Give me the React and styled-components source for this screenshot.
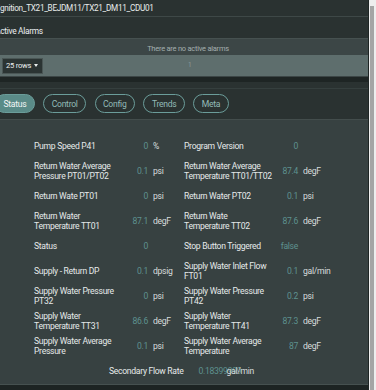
import React from "react";
import styled, { createGlobalStyle } from "styled-components";

const Global = createGlobalStyle`
  html, body {
    margin: 0;
    padding: 0;
    background: #2a3231;
    overflow: hidden;
  }
  body {
    font-family: Roboto, "Liberation Sans", sans-serif;
    letter-spacing: -0.3px;
  }
`;

const Page = styled.div`
  display: flex;
  width: 376px;
  height: 390px;
  overflow: hidden;
`;

const Main = styled.div`
  flex: 1;
  min-width: 0;
  overflow: hidden;
  display: flex;
  flex-direction: column;
`;

const Shifted = styled.div`
  margin-left: -8px;
  display: flex;
  flex-direction: column;
  flex: 1;
`;

const TitleBar = styled.div`
  height: 16px;
  display: flex;
  align-items: center;
  padding-left: 6px;
  font-size: 8.2px;
  color: #e8eceb;
  border-bottom: 1px solid #3e4847;
  white-space: nowrap;
`;

const AlarmsHeader = styled.div`
  height: 21px;
  box-sizing: border-box;
  display: flex;
  align-items: flex-end;
  padding: 0 0 2px 3px;
  font-size: 8.4px;
  color: #eceff0;
`;

const EmptyRow = styled.div`
  height: 17px;
  box-sizing: border-box;
  background: #3c4646;
  border-top: 1px solid #465150;
  display: flex;
  align-items: flex-end;
  justify-content: center;
  padding: 0 0 2px 16px;
  font-size: 7.5px;
  letter-spacing: -0.25px;
  color: #a3aeae;
`;

const Pager = styled.div`
  height: 21px;
  box-sizing: border-box;
  background: #5e6e6d;
  display: flex;
  align-items: center;
  padding-left: 10px;
  position: relative;
`;

const RowsSelect = styled.div`
  width: 41px;
  height: 16px;
  box-sizing: border-box;
  background: #2b3433;
  border: 1px solid #4a5655;
  display: flex;
  align-items: center;
  justify-content: space-between;
  padding: 0 4px 0 3px;
  font-size: 7.6px;
  letter-spacing: -0.25px;
  color: #eceff0;
  white-space: nowrap;
`;

const Caret = styled.span`
  width: 0;
  height: 0;
  border-left: 2.5px solid transparent;
  border-right: 2.5px solid transparent;
  border-top: 3px solid #e8eceb;
`;

const PageNum = styled.span`
  position: absolute;
  left: 196px;
  top: 6px;
  font-size: 6.5px;
  color: #8b9998;
`;

const TableFoot = styled.div`
  height: 6px;
  box-sizing: border-box;
  border-top: 1.5px solid #3c4646;
  background: #1e2524;
`;

const TabArea = styled.div`
  height: 32px;
  box-sizing: border-box;
  margin-top: 6px;
  border-top: 1px solid #353f3e;
  border-bottom: 1px solid #434d4c;
  display: flex;
  align-items: flex-start;
  gap: 8.5px;
  padding: 5px 0 0 3px;
`;

const Pill = styled.div`
  height: 19px;
  box-sizing: border-box;
  border-radius: 10px;
  border: 1px solid #6b9d9a;
  padding: 0 7.5px;
  display: flex;
  align-items: center;
  font-size: 8.6px;
  color: ${(p) => (p.$active ? "#f3f6f6" : "#92bab7")};
  background: ${(p) => (p.$active ? "#5a8b88" : "transparent")};
`;

const Panel = styled.div`
  flex: 1;
  background: #374141;
  display: flex;
  flex-direction: column;
  padding-top: 13.5px;
  border-bottom: 1px solid #465150;
`;

const Grid = styled.div`
  display: grid;
  grid-template-columns: 90px 24px 36px 90px 24px 1fr;
  grid-auto-rows: 25px;
  padding-left: 42px;
  font-size: 8.6px;
  line-height: 10.3px;
`;

const Label = styled.div`
  align-self: center;
  color: #e6eaea;
`;

const Value = styled.div`
  align-self: center;
  text-align: right;
  color: #5e918f;
  white-space: nowrap;
`;

const Unit = styled.div`
  align-self: center;
  padding-left: ${(p) => (p.$flush ? "0" : "5px")};
  color: #d8dddd;
  white-space: nowrap;
`;

const SummaryRow = styled.div`
  height: 25px;
  display: flex;
  align-items: center;
  padding-left: 117px;
  font-size: 8.6px;
`;

const SummaryValue = styled.div`
  width: 28px;
  margin-left: 15px;
  color: #5e918f;
  white-space: nowrap;
`;

const Footer = styled.div`
  height: 5px;
  background: #1d2423;
`;

const Scrollbar = styled.div`
  width: 8px;
  box-sizing: border-box;
  border-left: 1px solid #1e2524;
  background: #eeeeee;
  display: flex;
  padding: 6px 0 0 1px;
`;

const Thumb = styled.div`
  width: 4px;
  background: #a5a5a5;
`;

const rows = [
  ["Pump Speed P41", "0", "%", "Program Version", "0", ""],
  ["Return Water Average Pressure PT01/PT02", "0.1", "psi", "Return Water Average Temperature TT01/TT02", "87.4", "degF"],
  ["Return Wate PT01", "0", "psi", "Return Water PT02", "0.1", "psi"],
  ["Return Water Temperature TT01", "87.1", "degF", "Return Wate Temperature TT02", "87.6", "degF"],
  ["Status", "0", "", "Stop Button Triggered", "false", ""],
  ["Supply - Return DP", "0.1", "dpsig", "Supply Water Inlet Flow FT01", "0.1", "gal/min"],
  ["Supply Water Pressure PT32", "0", "psi", "Supply Water Pressure PT42", "0.2", "psi"],
  ["Supply Water Temperature TT31", "86.6", "degF", "Supply Water Temperature TT41", "87.3", "degF"],
  ["Supply Water Average Pressure", "0.1", "psi", "Supply Water Average Temperature", "87", "degF"],
];

const tabs = ["Status", "Control", "Config", "Trends", "Meta"];

export default function App() {
  return (
    <Page>
      <Global />
      <Main>
        <Shifted>
          <TitleBar>Ignition_TX21_BEJDM11/TX21_DM11_CDU01</TitleBar>
          <AlarmsHeader>Active Alarms</AlarmsHeader>
          <EmptyRow>There are no active alarms</EmptyRow>
          <Pager>
            <RowsSelect>
              25 rows <Caret />
            </RowsSelect>
            <PageNum>1</PageNum>
          </Pager>
          <TableFoot />
          <TabArea>
            {tabs.map((t, i) => (
              <Pill key={t} $active={i === 0}>{t}</Pill>
            ))}
          </TabArea>
          <Panel>
            <Grid>
              {rows.map((r, i) => (
                <React.Fragment key={i}>
                  <Label>{r[0]}</Label>
                  <Value>{r[1]}</Value>
                  <Unit>{r[2]}</Unit>
                  <Label>{r[3]}</Label>
                  <Value>{r[4]}</Value>
                  <Unit>{r[5]}</Unit>
                </React.Fragment>
              ))}
            </Grid>
            <SummaryRow>
              <Label>Secondary Flow Rate</Label>
              <SummaryValue>0.18399999</SummaryValue>
              <Unit $flush>gal/min</Unit>
            </SummaryRow>
          </Panel>
          <Footer />
        </Shifted>
      </Main>
      <Scrollbar>
        <Thumb />
      </Scrollbar>
    </Page>
  );
}
